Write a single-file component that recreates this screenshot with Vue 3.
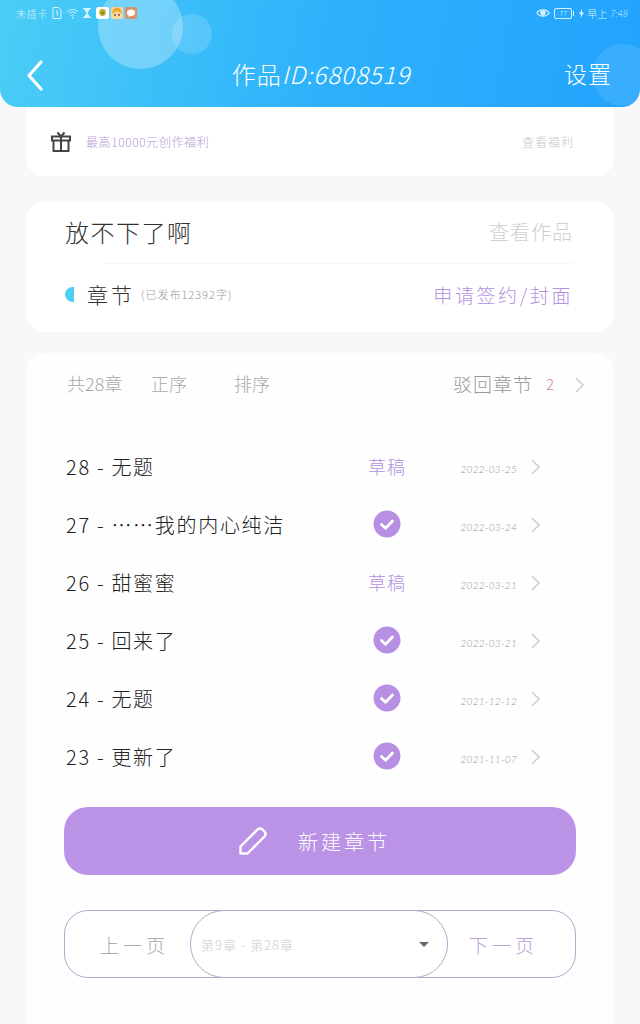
<template>
  <div class="page">
    <header class="topBar">
      <span class="bubble bubbleBig"></span>
      <span class="bubble bubbleSmall"></span>
      <span class="bubble bubbleRight"></span>
      <div class="statusBar">
        <div class="statusLeft">
          <span class="noSim">未插卡</span>
          <svg width="10" height="12" viewBox="0 0 10 12" fill="none" stroke="#d8f3ff" stroke-width="1">
            <path d="M1 .5h5.5L9 3v8.5H1z" />
            <path d="M4 4.500l1.200-.8v5" />
          </svg>
          <svg width="13" height="11" viewBox="0 0 14 11" fill="none" stroke="#d8f3ff" stroke-width="1">
            <path d="M1 3.500a9 9 0 0 1 12 0M3 5.700a6 6 0 0 1 8 0M5 7.800a3 3 0 0 1 4 0" />
            <circle cx="7" cy="10" r=".6" fill="#d8f3ff" />
          </svg>
          <svg class="hourglass" width="8" height="10" viewBox="0 0 9 11" fill="#d8f3ff">
            <path d="M0 0h9v1H8L5 5.500 8 10h1v1H0v-1h1l3-4.500L1 1H0z" />
          </svg>
          <div class="appIcons">
            <svg width="13" height="12" viewBox="0 0 13 12">
              <rect width="13" height="12" rx="2.500" fill="#fff" />
              <circle cx="6.500" cy="5.500" r="3.400" fill="#c9a92c" />
              <circle cx="6.500" cy="6" r="1.500" fill="#5b8f3a" />
            </svg>
            <svg width="12" height="12" viewBox="0 0 12 12">
              <rect width="12" height="12" rx="2" fill="#f9d9a0" />
              <path d="M1 7C1 2 4 .5 6 .5S11 2 11 7C9 5 8 4.500 6 4.500S3 5 1 7z" fill="#f0a62d" />
              <circle cx="4" cy="8" r=".9" fill="#7a4a1e" />
              <circle cx="8" cy="8" r=".9" fill="#7a4a1e" />
            </svg>
            <svg width="12" height="12" viewBox="0 0 12 12">
              <rect width="12" height="12" rx="2.500" fill="#d69468" />
              <ellipse cx="6" cy="5.700" rx="4" ry="3.200" fill="#fff" />
              <path d="M4 8l-.6 2L6 8.500z" fill="#fff" />
            </svg>
          </div>
        </div>
        <div class="statusRight">
          <svg width="14" height="10" viewBox="0 0 14 10" fill="none" stroke="#d8f3ff" stroke-width="1.100">
            <path d="M.8 5C3.500.8 10.500.8 13.200 5 10.500 9.200 3.500 9.200.8 5z" />
            <circle cx="7" cy="5" r="2.100" fill="#d8f3ff" />
          </svg>
          <div class="battery"><span>77</span></div>
          <svg width="5" height="9" viewBox="0 0 5 9" fill="#d8f3ff">
            <path d="M3 0L0 5h2L1.500 9 5 3.500H3z" />
          </svg>
          <span>早上</span>
          <span class="clock">7:48</span>
        </div>
      </div>
      <div class="navRow">
        <svg class="backIcon" width="18" height="32" viewBox="0 0 18 32" fill="none" stroke="#fff" stroke-width="3.200" stroke-linecap="round" stroke-linejoin="round">
          <path d="M15 2L3 15.500 15 29" />
        </svg>
        <div class="navTitle">作品<span class="navId">ID:6808519</span></div>
        <div class="navAction">设置</div>
      </div>
    </header>

    <section class="card welfareCard">
      <div class="welfareLeft">
        <svg width="20" height="21" viewBox="0 0 20 21" fill="none" stroke="#444" stroke-width="2">
          <rect x="1" y="5.500" width="18" height="4" />
          <path d="M2.500 9.500V20h15V9.500M10 5.500V20M10 5.500L6.500 1.500M10 5.500l3.500-4" />
        </svg>
        <span class="welfareText">最高10000元创作福利</span>
      </div>
      <span class="welfareLink">查看福利</span>
    </section>

    <section class="card workCard">
      <div class="workRow">
        <span class="workName">放不下了啊</span>
        <span class="workLink">查看作品</span>
      </div>
      <div class="divider"></div>
      <div class="chapterRow">
        <div class="chapterLeft">
          <span class="halfDot"></span>
          <span class="chapterTitle">章节</span>
          <span class="chapterCount">(已发布12392字)</span>
        </div>
        <span class="applyLink">申请签约/封面</span>
      </div>
    </section>

    <section class="card listCard">
      <div class="listHead">
        <div class="listHeadLeft">
          <span class="headTotal">共28章</span>
          <span class="headOrder">正序</span>
          <span>排序</span>
        </div>
        <div class="listHeadRight">
          <span class="rejected">驳回章节</span>
          <span class="rejectedNum">2</span>
          <svg class="headArrow" width="9" height="16" viewBox="0 0 9 16" fill="none" stroke="#ccc" stroke-width="1.500">
            <path d="M1 1l7 7-7 7" />
          </svg>
        </div>
      </div>

      <ul class="chapterList">
        <li v-for="item in chapters" :key="item.title" class="chapterItem">
          <span class="itemTitle">{{ item.title }}</span>
          <span class="itemStatus">
            <span v-if="item.draft" class="draft">草稿</span>
            <svg v-else width="28" height="28" viewBox="0 0 28 28">
              <circle cx="14" cy="14" r="13.500" fill="#b78fe3" />
              <path d="M8.500 14.500l4 3.800 7-7.300" fill="none" stroke="#fff" stroke-width="2.800" stroke-linecap="round" stroke-linejoin="round" />
            </svg>
          </span>
          <span class="itemDate">{{ item.date }}</span>
          <svg class="itemArrow" width="9" height="16" viewBox="0 0 9 16" fill="none" stroke="#ccc" stroke-width="1.500">
            <path d="M1 1l7 7-7 7" />
          </svg>
        </li>
      </ul>

      <div class="newBtn">
        <svg width="30" height="30" viewBox="0 0 30 30" fill="none" stroke="#fff" stroke-width="2.400" stroke-linejoin="round">
          <path d="M2.500 27.500v-7L19.500 3.500a3.500 3.500 0 0 1 5 0l2 2a3.500 3.500 0 0 1 0 5L9.500 27.500z" />
        </svg>
        <span>新建章节</span>
      </div>

      <div class="pager">
        <span class="pagerPrev">上一页</span>
        <div class="pagerSelect">
          <span>第9章 - 第28章</span>
          <i class="caret"></i>
        </div>
        <span class="pagerNext">下一页</span>
      </div>
    </section>
  </div>
</template>

<script setup>
const chapters = [
  { title: '28 - 无题', draft: true, date: '2022-03-25' },
  { title: '27 - ……我的内心纯洁', draft: false, date: '2022-03-24' },
  { title: '26 - 甜蜜蜜', draft: true, date: '2022-03-21' },
  { title: '25 - 回来了', draft: false, date: '2022-03-21' },
  { title: '24 - 无题', draft: false, date: '2021-12-12' },
  { title: '23 - 更新了', draft: false, date: '2021-11-07' },
]
</script>

<style>
html,
body {
  background: #f8f8f8;
}
</style>

<style scoped>
.page {
  width: 640px;
  height: 1024px;
  overflow: hidden;
  background: #f8f8f8;
  font-family: "Noto Sans CJK SC", "Noto Sans", sans-serif;
  font-weight: 300;
}

.topBar {
  position: relative;
  height: 107px;
  border-radius: 0 0 18px 18px;
  overflow: hidden;
  background: linear-gradient(100deg, #4bcdf6 0%, #2eb2fb 50%, #22a3fe 100%);
  color: #fff;
}

.bubble {
  position: absolute;
  border-radius: 50%;
  background: rgba(255, 255, 255, 0.28);
}

.bubbleBig {
  left: 98px;
  top: -16px;
  width: 85px;
  height: 85px;
}

.bubbleSmall {
  left: 172px;
  top: 14px;
  width: 40px;
  height: 40px;
  background: rgba(255, 255, 255, 0.16);
}

.bubbleRight {
  left: 592px;
  top: 44px;
  width: 62px;
  height: 62px;
  background: rgba(255, 255, 255, 0.1);
}

.statusBar {
  position: relative;
  height: 26px;
  display: flex;
  justify-content: space-between;
  align-items: center;
  padding: 0 12px 2px 16px;
  font-size: 10px;
  color: #d8f3ff;
}

.statusLeft,
.statusRight {
  display: flex;
  align-items: center;
}

.statusLeft {
  gap: 4px;
}

.statusRight {
  gap: 3px;
}

.noSim {
  letter-spacing: 0.6px;
}

.appIcons {
  display: flex;
  align-items: center;
  gap: 2px;
  margin-left: 1px;
}

.battery {
  position: relative;
  width: 18px;
  height: 11px;
  box-sizing: border-box;
  margin: 0 4px 0 1px;
  border: 1px solid #d8f3ff;
  border-radius: 2px;
  display: flex;
  align-items: center;
  justify-content: center;
  font-size: 7px;
  line-height: 1;
}

.battery::after {
  content: "";
  position: absolute;
  right: -3px;
  top: 2px;
  width: 1px;
  height: 5px;
  background: #d8f3ff;
}

.clock {
  font-family: "Lato", sans-serif;
  font-style: italic;
  font-size: 9px;
}

.navRow {
  position: relative;
  display: flex;
  align-items: center;
  height: 50px;
  padding: 0 28px 0 26px;
  margin-top: 20px;
}

.backIcon {
  flex: none;
  margin-top: 6px;
}

.navTitle {
  flex: 1;
  text-align: center;
  font-size: 24px;
  letter-spacing: 1px;
  padding-left: 34px;
}

.navId {
  font-style: italic;
}

.navAction {
  font-size: 23px;
  letter-spacing: 1px;
}

.card {
  margin: 0 26px;
  background: #fff;
  border-radius: 18px;
}

.welfareCard {
  height: 69px;
  padding: 0 40px 0 25px;
  border-radius: 0 0 18px 18px;
  display: flex;
  align-items: center;
  justify-content: space-between;
}

.welfareLeft {
  display: flex;
  align-items: center;
  gap: 15px;
}

.welfareText {
  font-size: 12px;
  color: #b79ad8;
  letter-spacing: 0.6px;
}

.welfareLink {
  font-size: 12px;
  color: #c8c8c8;
  letter-spacing: 1px;
}

.workCard {
  margin-top: 26px;
  height: 130px;
  padding: 0 41px 0 39px;
}

.workRow {
  height: 61px;
  box-sizing: border-box;
  padding-bottom: 3px;
  display: flex;
  align-items: center;
  justify-content: space-between;
}

.workName {
  font-size: 24px;
  letter-spacing: 1.5px;
  color: #333;
}

.workLink {
  font-size: 20px;
  letter-spacing: 1px;
  color: #cfcfcf;
}

.divider {
  height: 1px;
  background: #f6f6f6;
  margin: 0 0 0 40px;
}

.chapterRow {
  height: 60px;
  display: flex;
  align-items: center;
  justify-content: space-between;
}

.chapterLeft {
  display: flex;
  align-items: center;
}

.halfDot {
  width: 9px;
  height: 15px;
  border-radius: 8px 0 0 8px;
  background: #4fcdf2;
  margin-right: 13px;
}

.chapterTitle {
  font-size: 21px;
  letter-spacing: 3px;
  color: #333;
}

.chapterCount {
  font-size: 11px;
  margin-left: 6px;
  color: #999;
  letter-spacing: 1px;
}

.applyLink {
  font-size: 19px;
  letter-spacing: 2.600px;
  color: #b491e0;
}

.listCard {
  margin-top: 21px;
  height: 700px;
  padding: 0 38px;
  background: #fefefe;
}

.listHead {
  height: 60px;
  display: flex;
  align-items: center;
  justify-content: space-between;
  color: #aaa;
  font-size: 18px;
  margin-right: -8px;
}

.listHeadLeft {
  display: flex;
  align-items: center;
  padding-left: 3px;
}

.headTotal {
  width: 84px;
}

.headOrder {
  width: 83px;
}

.listHeadRight {
  display: flex;
  align-items: center;
}

.headArrow {
  margin-top: 3px;
}

.rejected {
  color: #999;
  font-size: 19px;
  letter-spacing: 1px;
}

.rejectedNum {
  width: 34px;
  text-align: center;
  color: #d88c98;
  font-size: 15px;
  margin-right: 8px;
}

.chapterList {
  list-style: none;
  margin: 24px 0 0;
  padding: 0;
}

.chapterItem {
  height: 58px;
  display: grid;
  grid-template-columns: 286px 70px 95px 23px;
  align-items: center;
  margin-left: 2px;
}

.itemTitle {
  font-size: 20px;
  color: #222;
  letter-spacing: 1.700px;
  white-space: nowrap;
}

.itemStatus {
  display: flex;
  justify-content: center;
  align-items: center;
}

.draft {
  font-size: 18px;
  letter-spacing: 1px;
  color: #b491e0;
}

.itemDate {
  font-family: "Lato", sans-serif;
  font-style: italic;
  font-size: 10px;
  color: #999;
  text-align: right;
  padding-top: 6px;
  letter-spacing: 0.3px;
}

.itemArrow {
  justify-self: end;
  margin-top: 2px;
}

.newBtn {
  margin-top: 22px;
  height: 68px;
  box-sizing: border-box;
  padding-right: 12px;
  border-radius: 24px;
  background: #bb93e6;
  color: #fff;
  display: flex;
  align-items: center;
  justify-content: center;
  gap: 30px;
  font-size: 20px;
  letter-spacing: 3px;
}

.pager {
  margin-top: 35px;
  height: 68px;
  box-sizing: border-box;
  border: 1px solid #b9a6cc;
  border-radius: 24px;
  display: flex;
  align-items: center;
  font-size: 19px;
  letter-spacing: 4px;
  background: #fff;
}

.pagerPrev {
  width: 125px;
  flex: none;
  padding-left: 35px;
  box-sizing: border-box;
  color: #aaa;
  white-space: nowrap;
}

.pagerSelect {
  flex: none;
  width: 258px;
  height: 68px;
  box-sizing: border-box;
  border: 1px solid #b9a6cc;
  border-radius: 34px;
  display: flex;
  align-items: center;
  justify-content: space-between;
  padding: 0 18px 0 10px;
  font-size: 13px;
  letter-spacing: 1px;
  color: #cfcfcf;
}

.caret {
  width: 0;
  height: 0;
  border-left: 5px solid transparent;
  border-right: 5px solid transparent;
  border-top: 5px solid #666;
}

.pagerNext {
  flex: 1;
  text-align: center;
  color: #b9a0d8;
  white-space: nowrap;
  padding-right: 16px;
}
</style>
